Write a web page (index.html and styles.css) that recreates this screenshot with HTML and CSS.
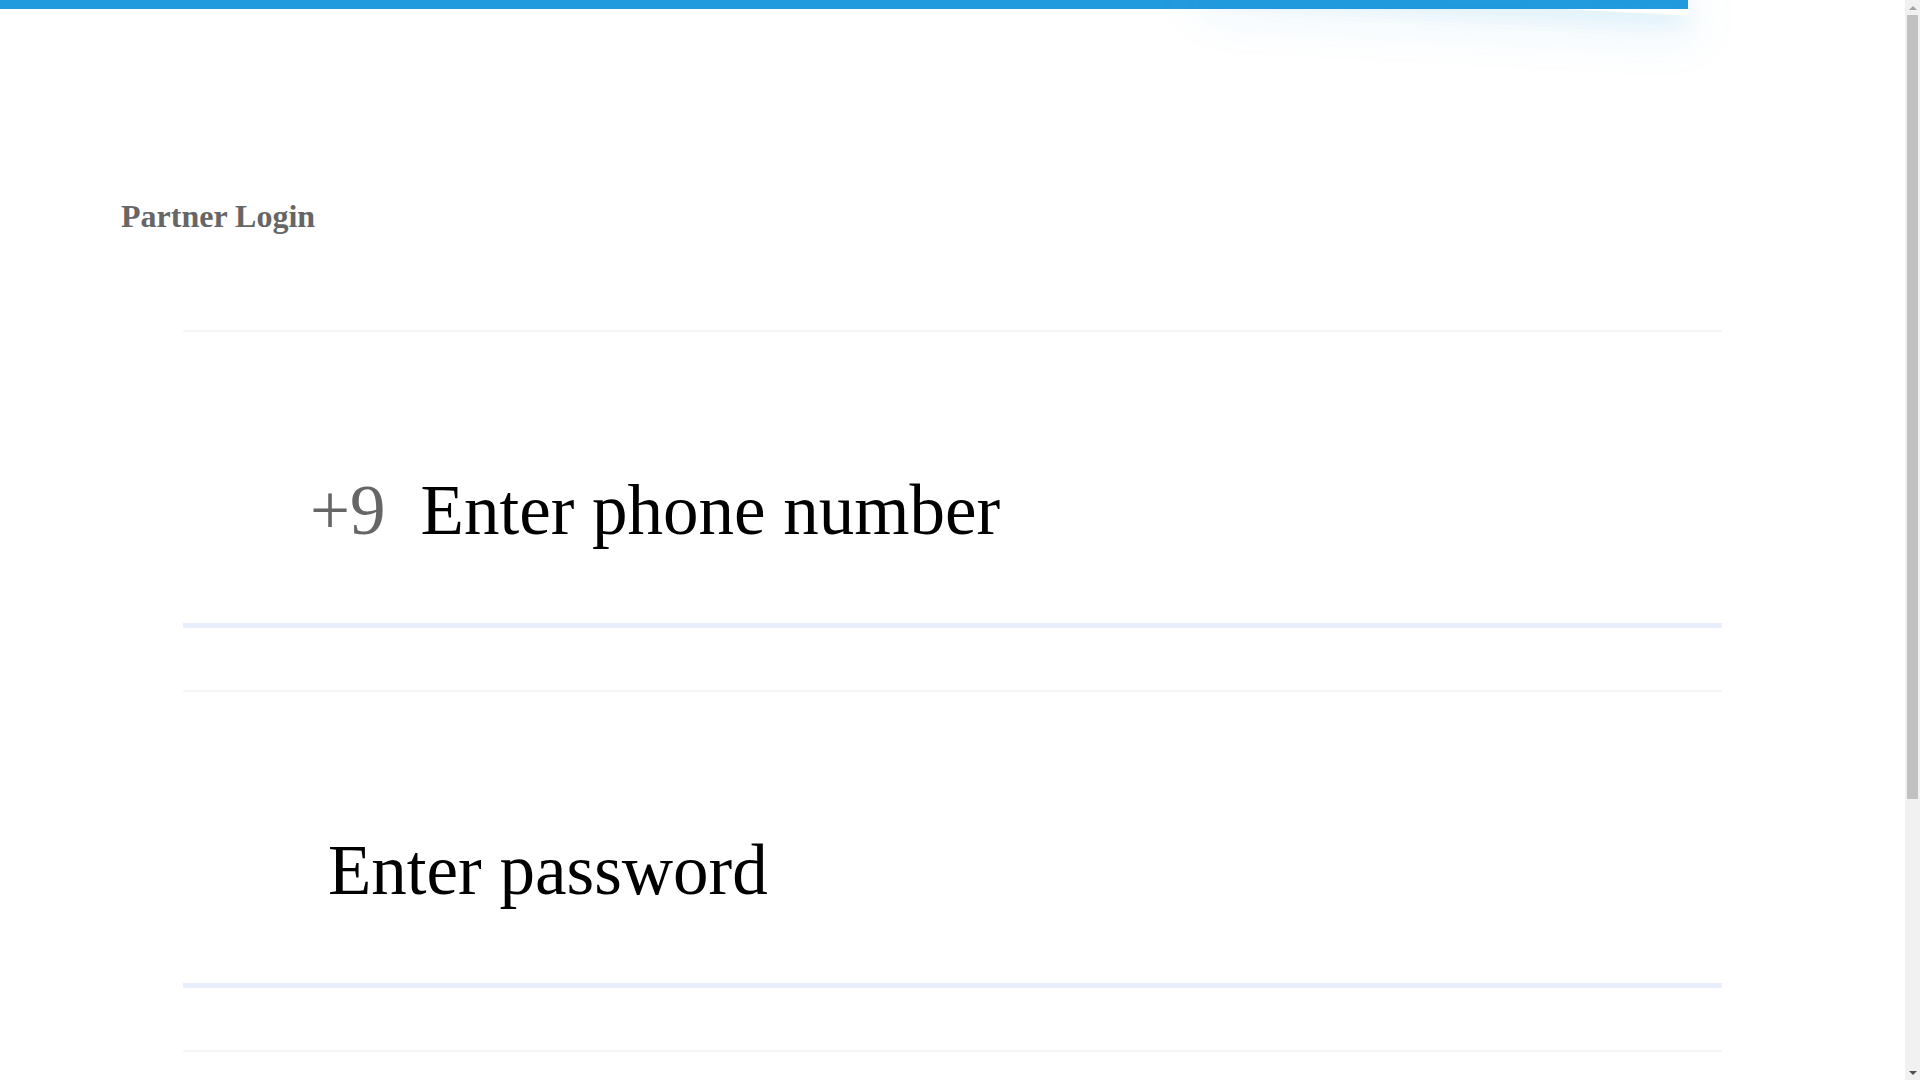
FILE: index.html
```html
<!DOCTYPE html>
<html lang="en">
<head>
<meta charset="utf-8">
<title>Partner Login</title>
<link rel="stylesheet" href="styles.css">
</head>
<body>
<div class="progress">
  <div class="bar"><div class="peg"></div></div>
</div>
<div class="scrollbar" aria-hidden="true">
  <div class="sb-btn sb-up"><span class="sb-arrow-up"></span></div>
  <div class="sb-track"><div class="sb-thumb"></div></div>
  <div class="sb-btn sb-down"><span class="sb-arrow-down"></span></div>
</div>
<main class="page">
  <h1 class="title">Partner Login</h1>
  <form class="form">
    <div class="field field-phone">
      <span class="prefix">+9</span>
      <input class="input" type="tel" placeholder="Enter phone number">
    </div>
    <div class="field field-password">
      <input class="input" type="password" placeholder="Enter password">
    </div>
    <div class="field field-empty"></div>
  </form>
</main>
</body>
</html>
```
FILE: styles.css
```css
html, body {
  margin: 0;
  padding: 0;
  background: #ffffff;
}

body {
  padding-right: 15px;
  font-family: "Liberation Serif", "Times New Roman", serif;
  color: #000;
}

/* progress bar */
.progress {
  pointer-events: none;
}

.progress .bar {
  position: fixed;
  top: 0;
  left: 0;
  width: 1688px;
  height: 9px;
  background: #229ade;
  z-index: 10;
}

.progress .peg {
  position: absolute;
  right: 0;
  top: 0;
  width: 480px;
  height: 100%;
  box-shadow: 0 8px 50px 6px rgba(34, 154, 222, 0.17), 0 4px 22px 0 rgba(34, 154, 222, 0.2);
  transform: rotate(3deg) translate(0, -6px);
}

/* classic scrollbar drawn over the right edge */
.scrollbar {
  position: fixed;
  top: 0;
  right: 0;
  width: 15px;
  height: 100vh;
  display: flex;
  flex-direction: column;
  background: #f1f1f1;
  z-index: 20;
}

.sb-btn {
  height: 15px;
  flex: none;
  display: flex;
  align-items: center;
  justify-content: center;
}

.sb-arrow-up {
  width: 0;
  height: 0;
  border-left: 4px solid transparent;
  border-right: 4px solid transparent;
  border-bottom: 4px solid #a3a3a3;
}

.sb-arrow-down {
  width: 0;
  height: 0;
  border-left: 4px solid transparent;
  border-right: 4px solid transparent;
  border-top: 4px solid #505050;
}

.sb-track {
  flex: 1;
  padding: 0 2px;
}

.sb-thumb {
  height: 784px;
  background: #c1c1c1;
}

/* page */
.page {
  padding: 198px 0 98px;
}

.title {
  margin: 0 0 95px 121px;
  font-size: 32px;
  font-weight: bold;
  line-height: normal;
  color: #666666;
}

.form {
  display: flex;
  flex-direction: column;
  gap: 62px;
  width: 1539px;
  margin: 0 auto;
}

.field {
  display: flex;
  align-items: center;
  box-sizing: border-box;
  height: 298px;
  padding: 138px 0 73px;
  border-top: 2px solid #f4f5f7;
  border-bottom: 5px solid #e8eefb;
}

.field-phone {
  padding-left: 127px;
  gap: 35px;
}

.field-password {
  padding-left: 145px;
}

.field-empty {
  border-bottom-color: #ffffff;
}

.prefix {
  font-size: 71px;
  line-height: 80px;
  height: 80px;
  color: #666666;
}

.input {
  flex: 1;
  min-width: 0;
  height: 80px;
  padding: 0;
  margin: 0;
  border: 0;
  outline: none;
  background: transparent;
  font-family: "Liberation Serif", "Times New Roman", serif;
  font-size: 71px;
  color: #000;
}

.input::placeholder {
  color: #000;
  opacity: 1;
}
```
